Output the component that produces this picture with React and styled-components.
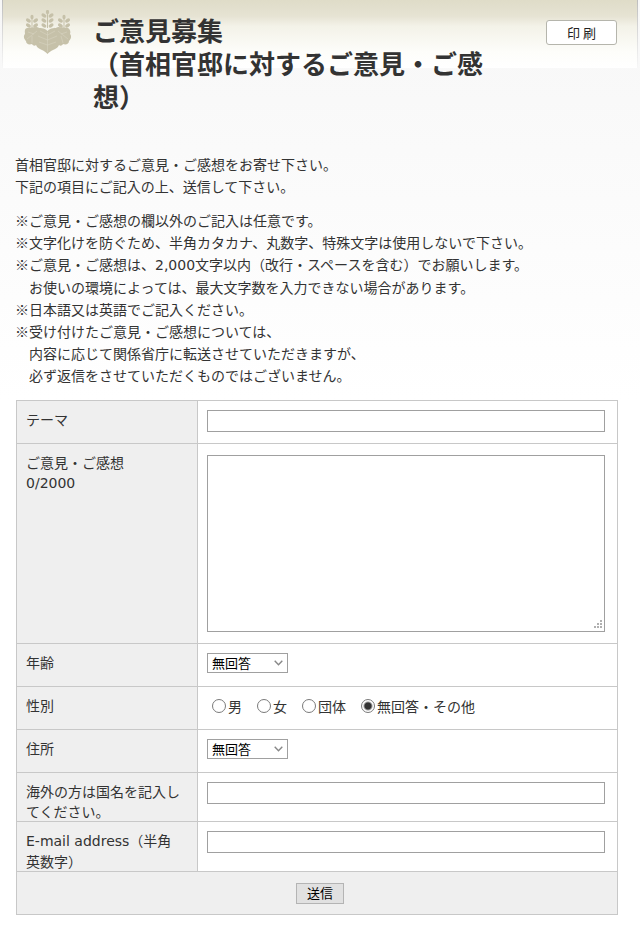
import React, { useState } from 'react'
import styled, { createGlobalStyle } from 'styled-components'

const GlobalStyle = createGlobalStyle`
* {
  box-sizing: border-box;
}
body {
  margin: 0;
  background: linear-gradient(#f7f7f7, #ffffff 400px) no-repeat #ffffff;
  color: #333333;
  font-family: "Noto Sans CJK JP", sans-serif;
  font-size: 14px;
  line-height: 22px;
}
`

const Page = styled.div`
  padding: 0 2px;
`

const Header = styled.header`
  display: flex;
  align-items: flex-start;
  height: 68px;
  padding: 10px 20px 0 20px;
  border: solid transparent;
  border-width: 0 1px;
  border-image: linear-gradient(#bcbcbc, #d8d8d8 30px, #f8f8f8) 1;
  background: linear-gradient(#dfdcc8, #e6e3d3 16px, #f3f2e8 26px, #fdfdfa 52px, #ffffff);
`

const Emblem = styled.svg`
  flex: none;
  width: 50px;
  height: 45px;
`

const Title = styled.h1`
  flex: 0 1 400px;
  margin: 3px 0 0 20px;
  font-size: 26px;
  line-height: 33px;
  font-weight: bold;
`

const PrintButton = styled.button`
  flex: none;
  width: 71px;
  height: 25px;
  margin: 10px 0 0 auto;
  padding: 0;
  border: 1px solid #b5b5ac;
  border-radius: 3px;
  background: #ffffff;
  color: #222222;
  font-family: inherit;
  font-size: 13px;
  line-height: 22px;
`

const Main = styled.main`
  padding: 85px 20px 32px 14px;
`

const Lead = styled.p`
  margin: 0 0 12px -1px;
`

const Notes = styled.ul`
  margin: 0 0 14px -1px;
  padding: 0;
  list-style: none;
`

const Note = styled.li`
  padding-left: 14px;
  text-indent: -14px;
`

const Latin = styled.span`
  font-family: "DejaVu Sans", sans-serif;
`

const FormTable = styled.table`
  width: 100%;
  border: 1px solid #c8c8c8;
  border-collapse: collapse;
  table-layout: fixed;
  background: #ffffff;
`

const Row = styled.tr`
  height: ${(props) => props.$height || 43}px;
  border-top: 1px solid #c8c8c8;
`

const Label = styled.th`
  width: 181px;
  padding: 8px 14px 0 9px;
  border-right: 1px solid #c8c8c8;
  background: #efefef;
  font-weight: normal;
  line-height: 20px;
  text-align: left;
  vertical-align: top;
`

const Cell = styled.td`
  padding: 9px 12px 0 9px;
  vertical-align: top;
`

const TextInput = styled.input`
  display: block;
  width: 100%;
  height: 22px;
  padding: 1px 3px;
  border: 1px solid #a0a0a0;
  border-radius: 0;
  background: #ffffff;
  font: inherit;
`

const TextArea = styled.textarea`
  display: block;
  width: 100%;
  height: 177px;
  margin-top: 2px;
  padding: 2px;
  border: 1px solid #a0a0a0;
  border-radius: 0;
  background: #ffffff;
  font: inherit;
  resize: none;
`

const AreaBox = styled.div`
  position: relative;
`

const Grip = styled.svg`
  position: absolute;
  right: 3px;
  bottom: 3px;
  width: 9px;
  height: 9px;
  pointer-events: none;
`

const Select = styled.select`
  display: block;
  appearance: none;
  width: 81px;
  height: 20px;
  padding: 0 0 0 4px;
  border: 1px solid #a0a0a0;
  border-radius: 0;
  background: #ffffff url("data:image/svg+xml,%3Csvg xmlns='http://www.w3.org/2000/svg' width='9' height='6' fill='none' stroke='%23888' stroke-width='1.4'%3E%3Cpath d='M.7.7l3.8 4 3.8-4'/%3E%3C/svg%3E") no-repeat right 4px center;
  color: #000000;
  font-family: inherit;
  font-size: 13px;
  line-height: 18px;
`

const Radios = styled.div`
  display: flex;
  gap: 15px;
  padding-left: 5px;
  line-height: 20px;
`

const RadioLabel = styled.label`
  display: flex;
  align-items: center;
  gap: 2px;
`

const Radio = styled.input`
  appearance: none;
  width: 14px;
  height: 14px;
  margin: 0;
  border: 1px solid #7a7a7a;
  border-radius: 50%;
  background: #ffffff;

  &:checked {
    background: radial-gradient(#333333 3px, #ffffff 5px);
  }
`

const SubmitCell = styled.td`
  padding: 0 0 0 6px;
  background: #efefef;
  text-align: center;
  vertical-align: middle;
`

const SubmitButton = styled.button`
  display: block;
  width: 48px;
  height: 21px;
  margin: 0 auto;
  padding: 0;
  border: 1px solid #b4b4b4;
  background: #e1e1e1;
  color: #000000;
  font-family: inherit;
  font-size: 13px;
  line-height: 18px;
`

const genders = ['男', '女', '団体', '無回答・その他']

// one flower stalk of the paulownia crest, drawn upwards from its root
const Stalk = ({ x, y, pairs }) => (
  <g transform={`translate(${x} ${y})`}>
    <path d={`M0 0V${-pairs * 5}`} stroke="#c6c1a9" strokeWidth="1" />
    <ellipse cx="0" cy={-pairs * 5 - 1} rx="1.6" ry="2.2" />
    {Array.from({ length: pairs }, (_, i) => (
      <g key={i}>
        <ellipse cx="-3.6" cy={-i * 5 - 2.5} rx="2.7" ry="1.7" transform={`rotate(32 -3.6 ${-i * 5 - 2.5})`} />
        <ellipse cx="3.6" cy={-i * 5 - 2.5} rx="2.7" ry="1.7" transform={`rotate(-32 3.6 ${-i * 5 - 2.5})`} />
      </g>
    ))}
  </g>
)

const Crest = () => (
  <Emblem viewBox="0 0 50 45" fill="#c6c1a9" aria-hidden="true">
    <Stalk x={24.5} y={18} pairs={3} />
    <Stalk x={9} y={18} pairs={2} />
    <Stalk x={41} y={18} pairs={2} />
    <path d="M24.500 21C21 17 17 19 14 17C10 17 7 18 4 18C1 19 2 22 2 24C0 26 1 29 3 31C3 34 6 35 9 34C10 36 12 36 13 35C14 38 17 39 19 40C21 41 23 42 24.500 44C26 42 28 41 30 40C32 39 35 38 36 35C37 36 39 36 40 34C43 35 46 34 46 31C48 29 49 26 47 24C48 22 47 19 45 18C42 18 39 17 35 17C32 19 28 17 24.500 21Z" />
    <g fill="none" stroke="#dbd7c5" strokeWidth="0.5">
      <path d="M24.500 22V42M24.500 25L17 21M24.500 25L32 21M24.500 30L15 26M24.500 30L34 26M24.500 35L16 32M24.500 35L33 32" />
      <path d="M14 21L4 29M11 24L5 22M9 26L9 33M38 26L40 33M35 21L45 29M38 24L44 22" />
    </g>
  </Emblem>
)

const App = () => {
  const [message, setMessage] = useState('')
  const [gender, setGender] = useState('無回答・その他')

  return (
    <>
      <GlobalStyle />
      <Page>
        <Header>
          <Crest />
          <Title>ご意見募集<br />（首相官邸に対するご意見・ご感想）</Title>
          <PrintButton type="button">印 刷</PrintButton>
        </Header>
        <Main>
          <Lead>
            首相官邸に対するご意見・ご感想をお寄せ下さい。<br />
            下記の項目にご記入の上、送信して下さい。
          </Lead>
          <Notes>
            <Note>※ご意見・ご感想の欄以外のご記入は任意です。</Note>
            <Note>※文字化けを防ぐため、半角カタカナ、丸数字、特殊文字は使用しないで下さい。</Note>
            <Note>
              ※ご意見・ご感想は、<Latin>2,000</Latin>文字以内（改行・スペースを含む）でお願いします。<br />
              お使いの環境によっては、最大文字数を入力できない場合があります。
            </Note>
            <Note>※日本語又は英語でご記入ください。</Note>
            <Note>
              ※受け付けたご意見・ご感想については、<br />
              内容に応じて関係省庁に転送させていただきますが、<br />
              必ず返信をさせていただくものではございません。
            </Note>
          </Notes>
          <form onSubmit={(e) => e.preventDefault()}>
            <FormTable>
              <tbody>
                <Row>
                  <Label scope="row"><label htmlFor="theme">テーマ</label></Label>
                  <Cell><TextInput id="theme" type="text" /></Cell>
                </Row>
                <Row $height={200}>
                  <Label scope="row">
                    <label htmlFor="message">ご意見・ご感想</label><br />
                    <Latin>{message.length}/2000</Latin>
                  </Label>
                  <Cell>
                    <AreaBox>
                      <TextArea id="message" maxLength={2000} value={message} onChange={(e) => setMessage(e.target.value)} />
                      <Grip viewBox="0 0 9 9" fill="#b0b0b0" aria-hidden="true">
                        <path d="M7 0h2v2H7zM7 3h2v2H7zM4 3h2v2H4zM7 6h2v2H7zM4 6h2v2H4zM1 6h2v2H1z" />
                      </Grip>
                    </AreaBox>
                  </Cell>
                </Row>
                <Row>
                  <Label scope="row"><label htmlFor="age">年齢</label></Label>
                  <Cell>
                    <Select id="age"><option>無回答</option></Select>
                  </Cell>
                </Row>
                <Row>
                  <Label scope="row" id="gender">性別</Label>
                  <Cell>
                    <Radios role="radiogroup" aria-labelledby="gender">
                      {genders.map((name) => (
                        <RadioLabel key={name}>
                          <Radio type="radio" name="gender" checked={gender === name} onChange={() => setGender(name)} />
                          {name}
                        </RadioLabel>
                      ))}
                    </Radios>
                  </Cell>
                </Row>
                <Row>
                  <Label scope="row"><label htmlFor="address">住所</label></Label>
                  <Cell>
                    <Select id="address"><option>無回答</option></Select>
                  </Cell>
                </Row>
                <Row $height={49}>
                  <Label scope="row"><label htmlFor="country">海外の方は国名を記入してください。</label></Label>
                  <Cell><TextInput id="country" type="text" /></Cell>
                </Row>
                <Row $height={49}>
                  <Label scope="row">
                    <label htmlFor="email"><Latin>E-mail address</Latin>（半角英数字）</label>
                  </Label>
                  <Cell><TextInput id="email" type="email" /></Cell>
                </Row>
                <Row>
                  <SubmitCell colSpan={2}>
                    <SubmitButton type="submit">送信</SubmitButton>
                  </SubmitCell>
                </Row>
              </tbody>
            </FormTable>
          </form>
        </Main>
      </Page>
    </>
  )
}

export default App
